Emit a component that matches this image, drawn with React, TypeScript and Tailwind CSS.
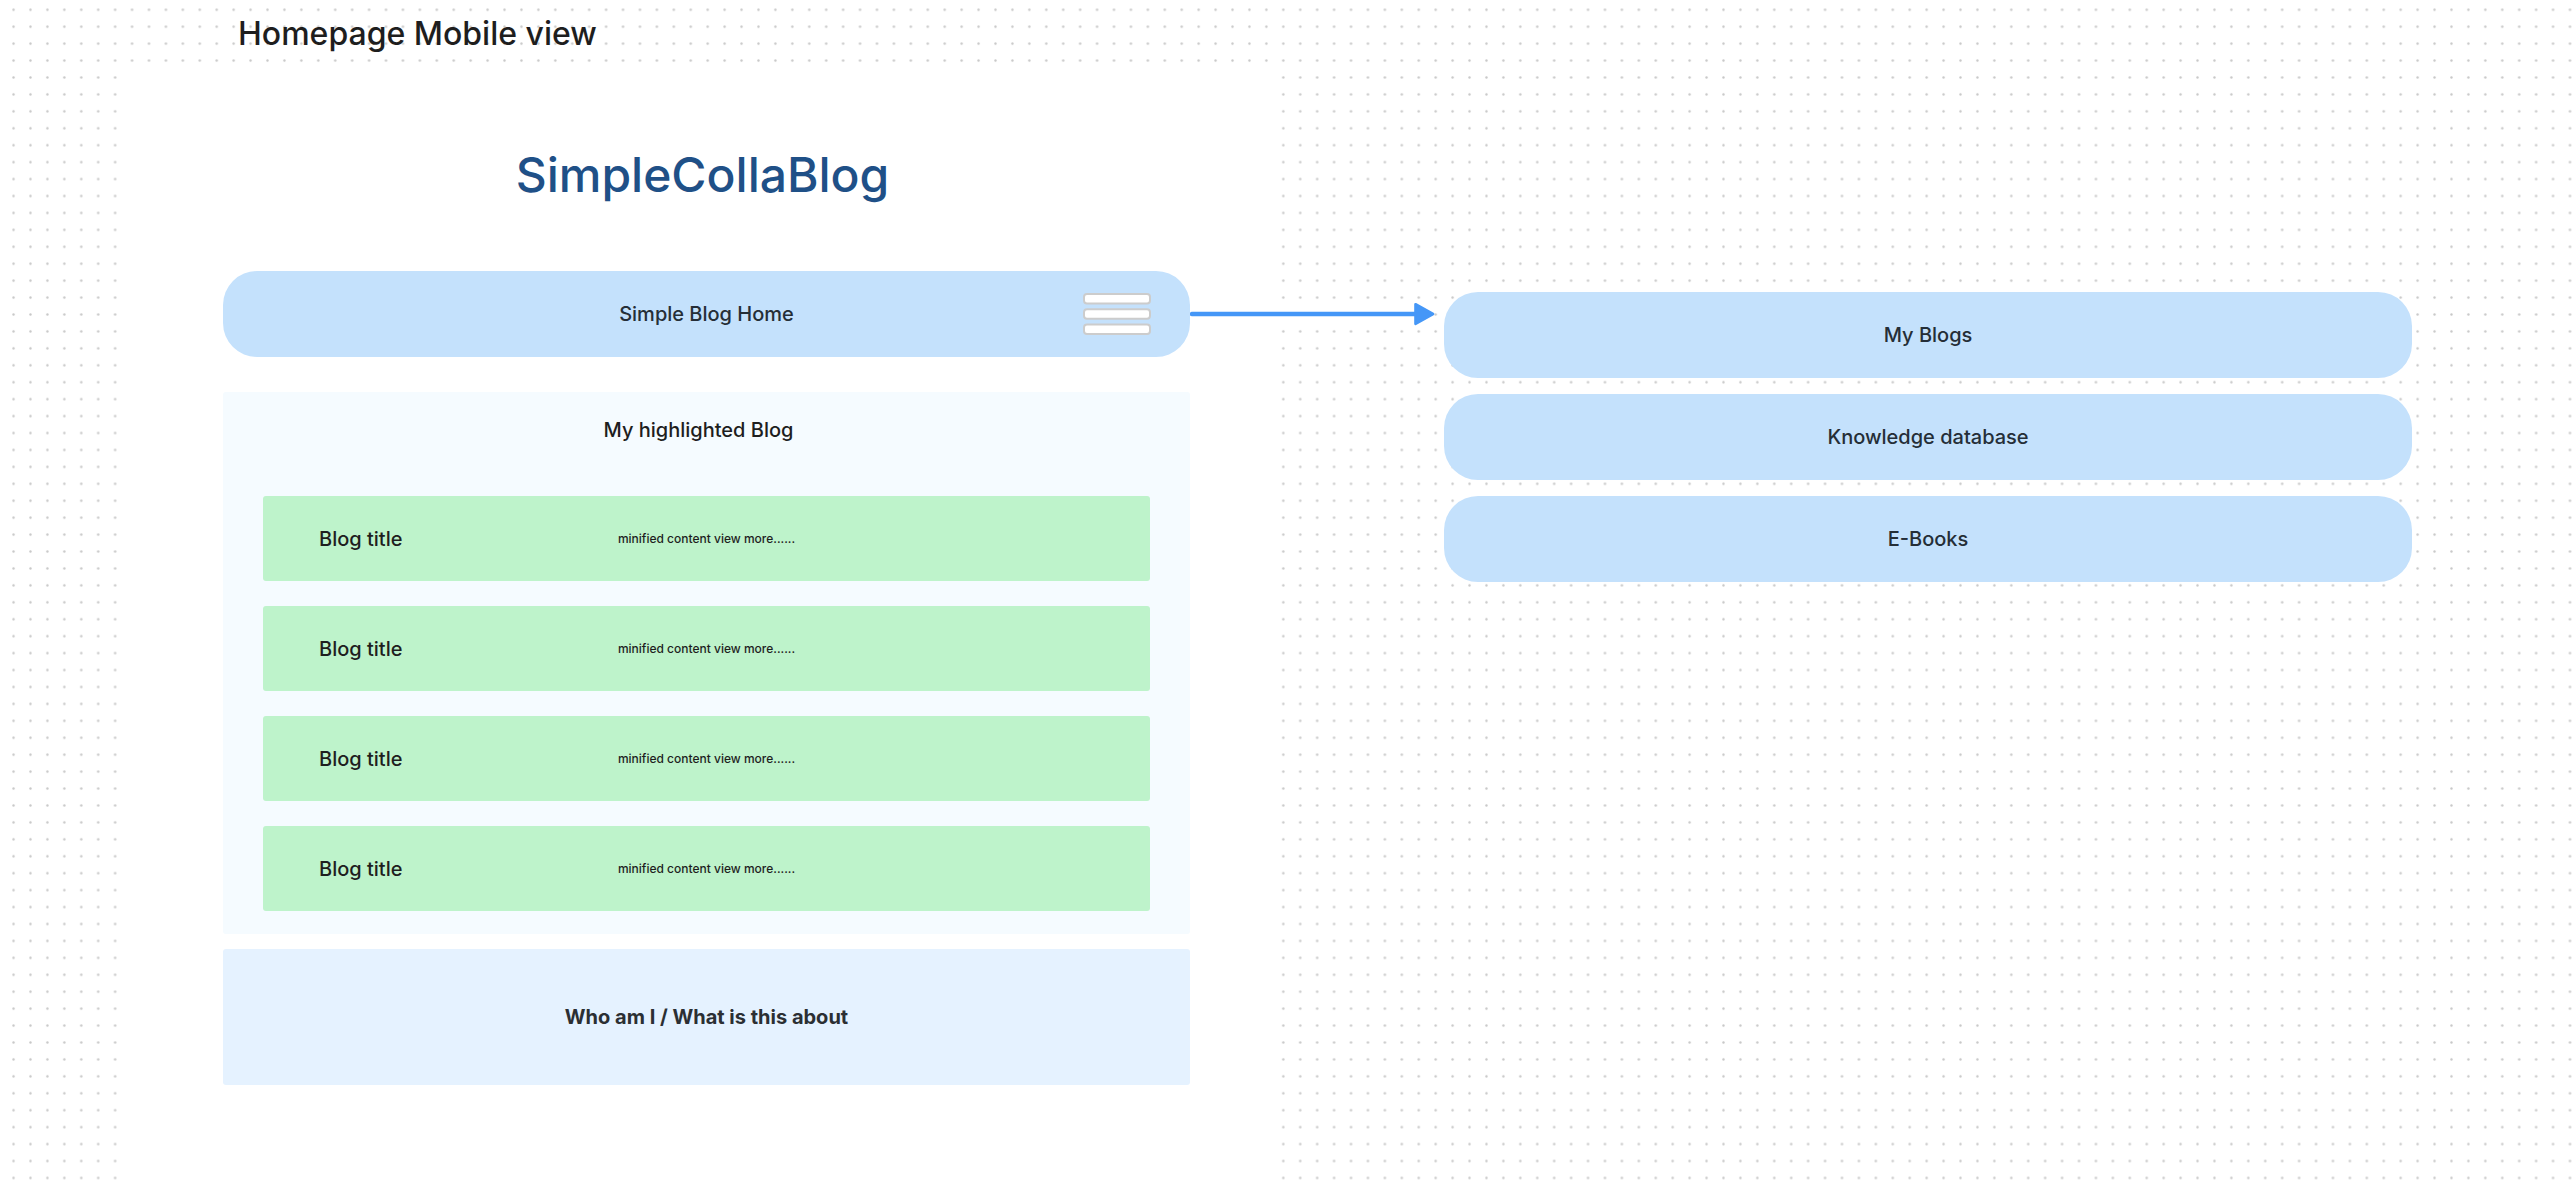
import React from "react";

const posts = [1, 2, 3, 4].map((id) => ({
  id,
  title: "Blog title",
  excerpt: "minified content view more......",
}));

const menuItems = ["My Blogs", "Knowledge database", "E-Books"];

function DotGrid() {
  return (
    <svg className="absolute inset-0 -z-10 h-full w-full" aria-hidden="true">
      <defs>
        <pattern id="dots" x="5.1" y="1.3" width="16.93" height="16.93" patternUnits="userSpaceOnUse">
          <circle cx="8.46" cy="8.46" r="1.2" fill="#c8c8c8" />
        </pattern>
      </defs>
      <rect width="100%" height="100%" fill="url(#dots)" />
    </svg>
  );
}

function MenuIcon() {
  return (
    <svg width="68" height="42" viewBox="0 0 68 42" fill="#fff" stroke="#ccc" strokeWidth="2" aria-hidden="true">
      <rect x="1" y="1" width="66" height="9.4" rx="3" />
      <rect x="1" y="16.3" width="66" height="9.4" rx="3" />
      <rect x="1" y="31.6" width="66" height="9.4" rx="3" />
    </svg>
  );
}

function Arrow() {
  return (
    <svg
      className="absolute top-1/2 left-full z-10 -translate-y-1/2"
      width="245"
      height="24"
      viewBox="0 0 245 24"
      aria-hidden="true"
    >
      <path d="M2 12H228" stroke="#4597f7" strokeWidth="4.4" strokeLinecap="round" />
      <path d="M225.5 2.2 243 12 225.5 21.8Z" fill="#4597f7" stroke="#4597f7" strokeWidth="2.6" strokeLinejoin="round" />
    </svg>
  );
}

export default function App() {
  return (
    <main className="relative isolate flex min-h-screen flex-col bg-white font-['Inter',sans-serif] text-[#1e1e1e]">
      <DotGrid />
      <h1 className="h-[69px] pt-[14px] pl-[238px] text-[32px] leading-[40px] font-medium">
        Homepage Mobile view
      </h1>

      <div className="grid flex-1 grid-cols-[1156fr_968fr] gap-x-[164px] pr-[162px] pl-[124px]">
        <section className="bg-white px-[90px] pt-[74px] pb-24 pl-[99px]">
          <h2 className="pr-2 text-center text-[48px] leading-[64px] font-medium text-[#1f5087]">
            SimpleCollaBlog
          </h2>

          <nav className="relative mt-16 flex h-[86px] items-center justify-center rounded-[34px] bg-[#c4e1fc] text-xl font-medium text-[#252e37]">
            <a href="#home">Simple Blog Home</a>
            <button type="button" aria-label="Open menu" className="absolute right-[39px]">
              <MenuIcon />
            </button>
            <Arrow />
          </nav>

          <section className="mt-[35px] rounded-[3px] bg-[#f5fbff] px-10 pt-6 pb-[23px]">
            <h3 className="pr-4 text-center text-xl font-medium">My highlighted Blog</h3>
            <ul className="mt-[52px] flex flex-col gap-[25px]">
              {posts.map((post) => (
                <li
                  key={post.id}
                  className="grid h-[85px] grid-cols-[1fr_auto_1fr] items-center rounded-[3px] bg-[#bef3cb] px-14"
                >
                  <h4 className="text-xl font-medium">{post.title}</h4>
                  <p className="text-xs font-medium">{post.excerpt}</p>
                </li>
              ))}
            </ul>
          </section>

          <section className="mt-[15px] flex h-[136px] items-center justify-center rounded-[3px] bg-[#e5f2ff]">
            <h3 className="text-xl font-bold text-[#2b2f33]">Who am I / What is this about</h3>
          </section>
        </section>

        <ul className="mt-[223px] flex flex-col gap-4">
          {menuItems.map((item) => (
            <li key={item}>
              <a
                href="#menu"
                className="flex h-[86px] items-center justify-center rounded-[34px] bg-[#c4e1fc] text-xl font-medium text-[#252e37]"
              >
                {item}
              </a>
            </li>
          ))}
        </ul>
      </div>
    </main>
  );
}
